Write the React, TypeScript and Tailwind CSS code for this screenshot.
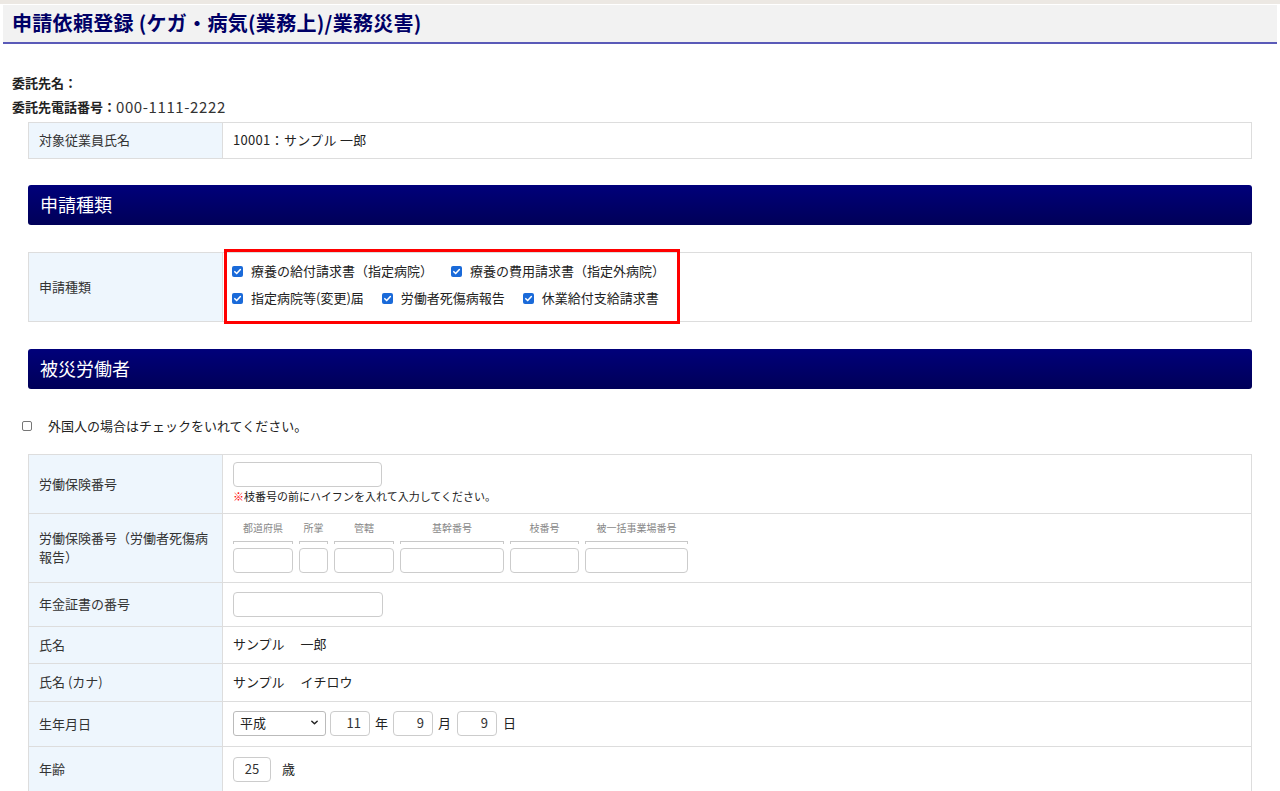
import React from "react";

function Check({ checked = true }: { checked?: boolean }) {
  if (!checked) {
    return (
      <span className="inline-block w-[10px] h-[10px] rounded-[2px] border border-[#767676] bg-white shrink-0" />
    );
  }
  return (
    <span className="inline-flex items-center justify-center w-[11px] h-[11px] rounded-[2px] bg-[#1a6ad9] shrink-0">
      <svg width="9" height="9" viewBox="0 0 10 10" fill="none">
        <path d="M2 5.2 L4.1 7.3 L8.2 2.8" stroke="white" strokeWidth="1.7" strokeLinecap="round" strokeLinejoin="round" />
      </svg>
    </span>
  );
}

function CbItem({ label }: { label: string }) {
  return (
    <span className="inline-flex items-center gap-[8px]">
      <Check />
      <span className="pb-[1px]">{label}</span>
    </span>
  );
}

function Label({ children }: { children: React.ReactNode }) {
  return (
    <div className="w-[194px] shrink-0 bg-[#eef6fd] border-r border-[#dddddd] pl-[10px] pr-[6px] pb-[2px] flex items-center text-[13px] leading-[19px] text-[#333333]">
      {children}
    </div>
  );
}

function SectionHeader({ title }: { title: string }) {
  return (
    <div className="mx-[28px] h-[40px] rounded-[3px] bg-gradient-to-b from-[#00007a] to-[#000058] flex items-center pl-[12px] pb-[2px] text-white text-[18px]">
      {title}
    </div>
  );
}

function Box({ w, value = "", align = "right" }: { w: string; value?: string; align?: string }) {
  return (
    <div
      className={
        w +
        " h-[25px] border border-[#cccccc] rounded-[4px] bg-white flex items-center px-[8px] pb-[1px] text-[13px] text-[#333333] " +
        (align === "right" ? "justify-end" : "justify-center")
      }
    >
      {value}
    </div>
  );
}

function SubCol({ label, w }: { label: string; w: string }) {
  return (
    <div className={w + " flex flex-col items-center"}>
      <div className="text-[10px] leading-[14px] text-[#888888] whitespace-nowrap">{label}</div>
      <div className="w-full h-[3px] mt-[6px] border-t border-x border-[#c8c8c8]" />
      <div className="w-full mt-[4px] h-[25px] border border-[#cccccc] rounded-[4px] bg-white" />
    </div>
  );
}

export default function App() {
  return (
    <div className="min-h-[791px] bg-white font-['Noto_Sans_CJK_JP','Noto_Sans',sans-serif] text-[#333333] overflow-hidden">
      <div className="h-[4px] bg-[#ece8e3]" />
      <div className="mx-[3px] mt-[1px] h-[39px] bg-[#f2f2f2] border-b-2 border-[#5a5ab8] flex items-center pl-[9px] pb-[1px]">
        <h1 className="text-[20px] font-bold text-[#000066] tracking-[0.3px]">
          申請依頼登録 (ケガ・病気(業務上)/業務災害)
        </h1>
      </div>

      <div className="pl-[12px] pt-[27px]">
        <div className="h-[24px] flex items-center text-[13px] font-bold text-[#222222]">委託先名：</div>
        <div className="h-[24px] flex items-center text-[13px] text-[#222222]">
          <span className="font-bold">委託先電話番号：</span>
          <span className="text-[15px] tracking-[0.6px] text-[#333333]">000-1111-2222</span>
        </div>
      </div>

      <div className="mx-[28px] mt-[3px] border-t border-x border-[#dddddd]">
        <div className="flex h-[36px] border-b border-[#dddddd]">
          <Label>対象従業員氏名</Label>
          <div className="flex-1 px-[10px] pb-[2px] flex items-center text-[13px] text-[#222222] tracking-[0.3px]">10001：サンプル 一郎</div>
        </div>
      </div>

      <div className="mt-[26px]">
        <SectionHeader title="申請種類" />
      </div>

      <div className="relative mx-[28px] mt-[27px] border-t border-x border-[#dddddd]">
        <div className="flex h-[69px] border-b border-[#dddddd]">
          <Label>申請種類</Label>
          <div className="flex-1 pl-[9px] pt-[5px] flex flex-col text-[13px] text-[#222222]">
            <div className="h-[27px] flex items-center gap-[18px]">
              <CbItem label="療養の給付請求書（指定病院）" />
              <CbItem label="療養の費用請求書（指定外病院）" />
            </div>
            <div className="h-[27px] flex items-center gap-[18px]">
              <CbItem label="指定病院等(変更)届" />
              <CbItem label="労働者死傷病報告" />
              <CbItem label="休業給付支給請求書" />
            </div>
          </div>
        </div>
        <div className="absolute left-[195px] top-[-4px] w-[456px] h-[75px] border-[3px] border-[#ff0000] pointer-events-none" />
      </div>

      <div className="mt-[27px]">
        <SectionHeader title="被災労働者" />
      </div>

      <div className="mt-[25px] h-[24px] pl-[22px] flex items-center gap-[16px] text-[13px] text-[#222222]">
        <Check checked={false} />
        <span className="pb-[1px]">外国人の場合はチェックをいれてください。</span>
      </div>

      <div className="mx-[28px] mt-[16px] border-t border-x border-[#dddddd]">
        <div className="flex h-[59px] border-b border-[#dddddd]">
          <Label>労働保険番号</Label>
          <div className="flex-1 px-[10px] pt-[7px] flex flex-col">
            <Box w="w-[149px]" />
            <div className="mt-[2px] text-[11px] leading-[14px] text-[#222222]">
              <span className="text-[#ff0000]">※</span>枝番号の前にハイフンを入れて入力してください。
            </div>
          </div>
        </div>

        <div className="flex h-[69px] border-b border-[#dddddd]">
          <Label>労働保険番号（労働者死傷病報告）</Label>
          <div className="flex-1 px-[10px] pt-[7px] flex items-start gap-[6px]">
            <SubCol label="都道府県" w="w-[60px]" />
            <SubCol label="所掌" w="w-[29px]" />
            <SubCol label="管轄" w="w-[60px]" />
            <SubCol label="基幹番号" w="w-[104px]" />
            <SubCol label="枝番号" w="w-[69px]" />
            <SubCol label="被一括事業場番号" w="w-[103px]" />
          </div>
        </div>

        <div className="flex h-[44px] border-b border-[#dddddd]">
          <Label>年金証書の番号</Label>
          <div className="flex-1 px-[10px] flex items-center">
            <Box w="w-[150px]" />
          </div>
        </div>

        <div className="flex h-[37px] border-b border-[#dddddd]">
          <Label>氏名</Label>
          <div className="flex-1 px-[10px] pb-[2px] flex items-center text-[13px] text-[#222222]">サンプル　 一郎</div>
        </div>

        <div className="flex h-[38px] border-b border-[#dddddd]">
          <Label>氏名 (カナ)</Label>
          <div className="flex-1 px-[10px] pb-[2px] flex items-center text-[13px] text-[#222222]">サンプル　 イチロウ</div>
        </div>

        <div className="flex h-[45px] border-b border-[#dddddd]">
          <Label>生年月日</Label>
          <div className="flex-1 px-[10px] pb-[2px] flex items-center text-[13px] text-[#222222]">
            <div className="w-[93px] h-[25px] border border-[#bbbbbb] rounded-[3px] bg-white flex items-center justify-between pl-[6px] pr-[6px] pb-[1px]">
              <span>平成</span>
              <svg width="9" height="9" viewBox="0 0 10 10" fill="none">
                <path d="M2 3.5 L5 6.5 L8 3.5" stroke="#222222" strokeWidth="1.6" strokeLinecap="round" strokeLinejoin="round" />
              </svg>
            </div>
            <div className="ml-[4px]">
              <Box w="w-[40px]" value="11" />
            </div>
            <span className="ml-[5px] mr-[5px]">年</span>
            <Box w="w-[40px]" value="9" />
            <span className="ml-[5px] mr-[6px]">月</span>
            <Box w="w-[40px]" value="9" />
            <span className="ml-[6px]">日</span>
          </div>
        </div>

        <div className="flex h-[46px] border-b border-[#dddddd]">
          <Label>年齢</Label>
          <div className="flex-1 px-[10px] flex items-center text-[13px] text-[#222222]">
            <Box w="w-[38px]" value="25" align="center" />
            <span className="ml-[11px] pb-[1px]">歳</span>
          </div>
        </div>
      </div>
    </div>
  );
}
